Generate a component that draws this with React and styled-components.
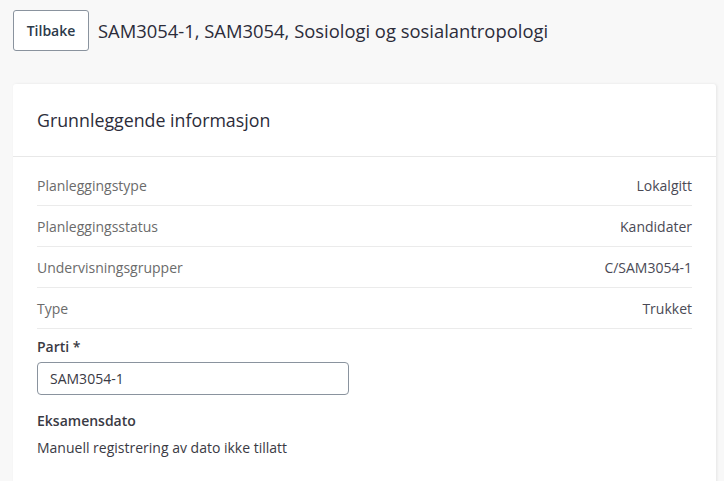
import React from "react";
import styled, { createGlobalStyle } from "styled-components";

const GlobalStyle = createGlobalStyle`
  html, body {
    margin: 0;
    padding: 0;
    background: #f8f8f8;
  }
  body {
    font-family: "Open Sans", "Noto Sans", "Liberation Sans", sans-serif;
    color: #2c2c3a;
  }
`;

const rows = [
  { label: "Planleggingstype", value: "Lokalgitt" },
  { label: "Planleggingsstatus", value: "Kandidater" },
  { label: "Undervisningsgrupper", value: "C/SAM3054-1" },
  { label: "Type", value: "Trukket" },
];

const App = () => {
  return (
    <Page>
      <GlobalStyle />
      <TopBar>
        <BackButton>Tilbake</BackButton>
        <Title>SAM3054-1, SAM3054, Sosiologi og sosialantropologi</Title>
      </TopBar>

      <Card>
        <CardHeader>Grunnleggende informasjon</CardHeader>
        <CardBody>
          {rows.map((row) => (
            <InfoRow key={row.label}>
              <span>{row.label}</span>
              <Value>{row.value}</Value>
            </InfoRow>
          ))}

          <Field>
            <FieldLabel>Parti *</FieldLabel>
            <Input defaultValue="SAM3054-1" />
          </Field>

          <Field>
            <FieldLabel>Eksamensdato</FieldLabel>
            <Note>Manuell registrering av dato ikke tillatt</Note>
          </Field>
        </CardBody>
      </Card>
    </Page>
  );
};

export default App;

let Page = styled.div`
  padding: 10px 8px 0 13px;
  height: 481px;
  overflow: hidden;
  box-sizing: border-box;
`;

let TopBar = styled.div`
  display: flex;
  align-items: center;
  gap: 9px;
`;

let BackButton = styled.button`
  width: 76px;
  height: 41px;
  background: #fff;
  border: 1px solid #8a939e;
  border-radius: 3px;
  font-family: inherit;
  font-size: 14px;
  font-weight: 600;
  color: #2c3a4a;
  cursor: pointer;
`;

let Title = styled.h1`
  margin: 0;
  font-size: 18.4px;
  font-weight: 400;
  color: #2c2c3a;
`;

let Card = styled.div`
  margin-top: 33px;
  width: 703px;
  background: #fff;
  border-radius: 3px 3px 0 0;
  box-shadow: 1px 0 3px rgba(0, 0, 0, 0.08);
`;

let CardHeader = styled.div`
  height: 72px;
  display: flex;
  align-items: center;
  padding: 0 24px;
  border-bottom: 1px solid #e8e8e8;
  font-size: 17.8px;
  color: #2c2c3a;
`;

let CardBody = styled.div`
  padding: 8px 24px 60px;
`;

let InfoRow = styled.div`
  display: flex;
  justify-content: space-between;
  align-items: center;
  height: 40px;
  border-bottom: 1px solid #ebebeb;
  font-size: 14px;
  color: #6b6b6b;
`;

let Value = styled.span`
  color: #4a4a55;
`;

let Field = styled.div`
  display: flex;
  flex-direction: column;
  margin-top: 8px;
  & + & {
    margin-top: 16px;
  }
`;

let FieldLabel = styled.label`
  font-size: 14px;
  font-weight: 600;
  color: #3a3a44;
  margin-bottom: 6px;
`;

let Input = styled.input`
  width: 312px;
  height: 33px;
  box-sizing: border-box;
  border: 1px solid #8a939e;
  border-radius: 4px;
  padding: 0 12px;
  font-family: inherit;
  font-size: 14px;
  color: #3a3a44;
`;

let Note = styled.div`
  margin-top: 2px;
  font-size: 14px;
  color: #3a3a44;
`;
